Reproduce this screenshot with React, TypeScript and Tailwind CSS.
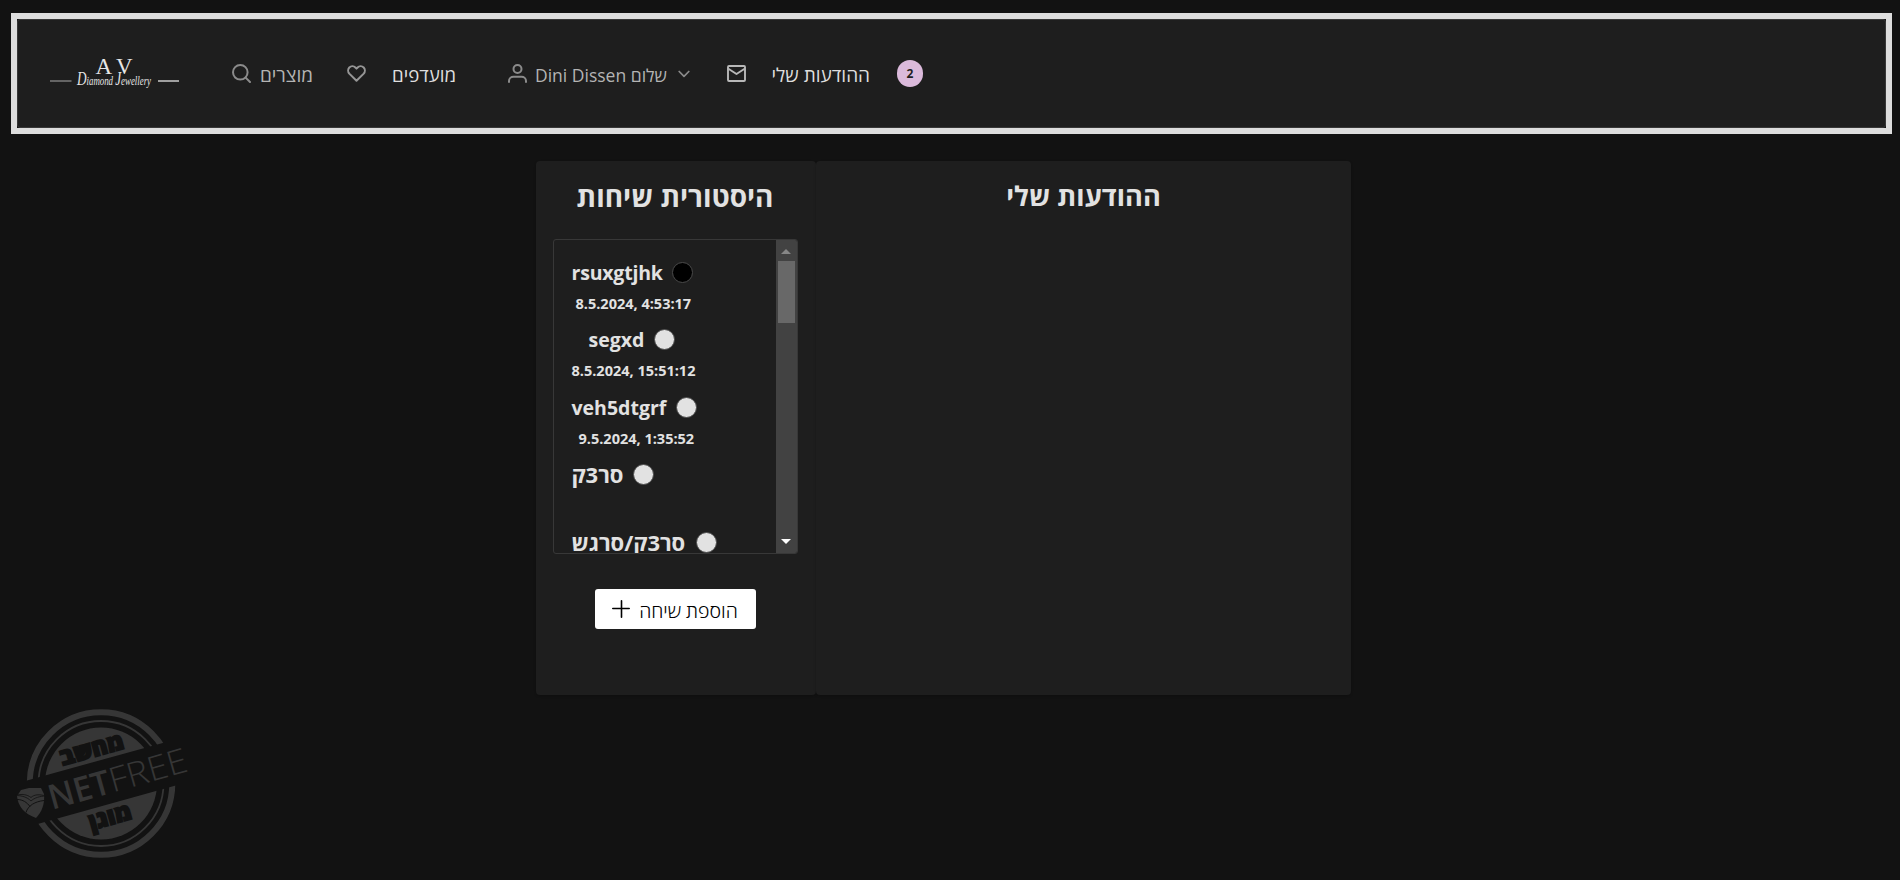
import React from 'react';

type IconProps = { className?: string };

const SearchIcon = ({ className }: IconProps) => (
  <svg viewBox="0 0 19 19" className={className} fill="none" stroke="currentColor" strokeWidth="2" strokeLinecap="round">
    <circle cx="8.3" cy="8.3" r="7.3" />
    <path d="M13.6 13.6 18 18" />
  </svg>
);

const HeartIcon = ({ className }: IconProps) => (
  <svg viewBox="0 0 19 17" className={className} fill="none" stroke="currentColor" strokeWidth="2" strokeLinejoin="round">
    <path d="M9.5 15.800 2.300 8.600C.7 6.800.8 4.100 2.300 2.500c1.800-1.700 4.400-1.700 6.100 0l1.100 1.100 1.100-1.100c1.700-1.700 4.300-1.700 6.100 0 1.500 1.600 1.600 4.300 0 6.100Z" />
  </svg>
);

const UserIcon = ({ className }: IconProps) => (
  <svg viewBox="0 0 19 19" className={className} fill="none" stroke="currentColor" strokeWidth="2" strokeLinecap="round">
    <circle cx="9.500" cy="5" r="4" />
    <path d="M1 17.900V17c0-2.500 2-4.200 4.500-4.200h8c2.500 0 4.500 1.700 4.500 4.200v.9" />
  </svg>
);

const ChevronIcon = ({ className }: IconProps) => (
  <svg viewBox="0 0 12 8" className={className} fill="none" stroke="currentColor" strokeWidth="1.700" strokeLinecap="round" strokeLinejoin="round">
    <path d="M1.200 1.500 6 6.300l4.800-4.800" />
  </svg>
);

const EnvelopeIcon = ({ className }: IconProps) => (
  <svg viewBox="0 0 19 17" className={className} fill="none" stroke="currentColor" strokeWidth="1.900" strokeLinejoin="round">
    <rect x="1" y="1" width="17" height="15" rx="1" />
    <path d="M1 3.500 9.500 9 18 3.500" />
  </svg>
);

const PlusIcon = ({ className }: IconProps) => (
  <svg viewBox="0 0 18 18" className={className} fill="none" stroke="currentColor" strokeWidth="1.600" strokeLinecap="round">
    <path d="M9.500 .8v16.400M.8 8.500h16.400" />
  </svg>
);

const Logo = () => (
  <svg viewBox="0 -6 130 46" className="h-[46px] w-[130px] shrink-0" fill="none" stroke="#e6e6e6">
    <g fill="#e6e6e6" stroke="none" fontFamily="Liberation Serif, serif">
      <text x="45.500" y="16.500" fontSize="23">A</text>
      <text x="66" y="16.500" fontSize="23">V</text>
      <text x="27" y="28" fontSize="12" fontStyle="italic" textLength="74" lengthAdjust="spacingAndGlyphs">
        <tspan fontSize="18">D</tspan>iamond <tspan fontSize="18">J</tspan>ewellery
      </text>
    </g>
    <path d="M0 24h21.500" stroke="#8c8c8c" strokeWidth="1.300" />
    <path d="M108 24h21" strokeWidth="1.300" />
  </svg>
);

const Watermark = () => (
  <svg viewBox="0 0 190 170" className="h-[170px] w-[190px]" fill="none">
    <defs>
      <clipPath id="disc-halves">
        <path d="M-20-60H260V16L-20 93.500ZM-20 140 260 62V300H-20Z" />
      </clipPath>
    </defs>
    <g clipPath="url(#disc-halves)">
      <circle cx="101" cy="83.500" r="71.300" stroke="#363636" strokeWidth="6" />
      <circle cx="101" cy="83.500" r="62.500" stroke="#363636" strokeWidth="1.800" />
      <circle cx="101" cy="83.500" r="56" fill="#363636" />
    </g>
    <g fontFamily="Open Sans, Noto Sans, sans-serif">
      <g fill="#121212" stroke="#121212" strokeWidth="1.800" fontSize="23" fontWeight="800" textAnchor="middle">
        <text transform="translate(63 65.500) rotate(-15.500)" x="32" y="0" direction="rtl" textLength="65" lengthAdjust="spacingAndGlyphs">מחשב</text>
        <text transform="translate(92 130) rotate(-15.500)" x="21" y="0" direction="rtl" textLength="43" lengthAdjust="spacingAndGlyphs">מוגן</text>
      </g>
      <g transform="translate(53 109.500) rotate(-15.800)" fill="#363636">
        <text x="-1" y="0" fontSize="34" fontWeight="600" textLength="63" lengthAdjust="spacingAndGlyphs">NET</text>
        <text x="62" y="0" fontSize="34" fontWeight="300" textLength="80" lengthAdjust="spacingAndGlyphs">FREE</text>
      </g>
    </g>
    <path d="M21 90 29 88 41 88 44 94C45 103 42 112 36 118 25 114 18 107 17 96Z" fill="#363636" />
    <path d="M15 95.500c7-2 12-1 16 2 3-3 8-3.500 15-1.500-6 0-12 2-15 5-4-4-9-5.500-16-5.500Z" fill="#363636" stroke="#121212" strokeWidth=".8" />
    <path d="M17 99.500c6 0 10 3 13 7M44 100.500c-9 1-16 5-18 12" stroke="#121212" />
  </svg>
);

type Chat = { name: string; date: string; dot: string; title: string; stamp: string };

const chats: Chat[] = [
  { name: 'rsuxgtjhk', date: '8.5.2024, 4:53:17', dot: 'bg-black', title: 'w-[90px] text-[19.5px] tracking-[-0.2px]', stamp: 'ml-1' },
  { name: 'segxd', date: '8.5.2024, 15:51:12', dot: 'bg-[#e2e2e2]', title: 'ml-[17px] w-[55px] text-[19.5px]', stamp: '' },
  { name: 'veh5dtgrf', date: '9.5.2024, 1:35:52', dot: 'bg-[#e2e2e2]', title: 'w-[94px] text-[19.5px]', stamp: 'ml-[7px]' },
  { name: 'סר3ק', date: '', dot: 'bg-[#e2e2e2]', title: 'w-[51px] text-[22px]', stamp: '' },
  { name: 'סר3ק/סרגש', date: '', dot: 'bg-[#e2e2e2]', title: 'w-[114px] text-[22px]', stamp: '' },
];

const Header = () => (
  <header className="h-[121px] border-[6px] border-[#dddddd] bg-[#121212]">
    <nav className="flex h-full items-center rounded-[3px] border border-[#383838] bg-[#1e1e1e] pl-8 text-[19px] whitespace-nowrap text-[#b4b4b4]">
      <Logo />
      <SearchIcon className="ml-[52px] h-[19px] w-[19px] shrink-0 text-[#8b8b8b]" />
      <span dir="rtl" className="ml-[9px] w-[53px] shrink-0 pt-[3px]">מוצרים</span>
      <HeartIcon className="ml-[34px] h-[17px] w-[19px] shrink-0 text-[#969696]" />
      <span dir="rtl" className="ml-[26px] w-[64px] shrink-0 pt-[3px] text-[18.7px] text-[#dedede]">מועדפים</span>
      <UserIcon className="ml-[52px] h-[19px] w-[19px] shrink-0 text-[#8b8b8b]" />
      <span dir="ltr" className="ml-2 w-[132px] shrink-0 pt-[3px] text-[17.5px]">Dini Dissen שלום</span>
      <ChevronIcon className="ml-[11px] h-2 w-3 shrink-0 text-[#8b8b8b]" />
      <EnvelopeIcon className="ml-[37px] h-[17px] w-[19px] shrink-0 text-[#b8b8b8]" />
      <span dir="rtl" className="ml-[26px] w-[98px] shrink-0 pt-[3px] text-[#dedede]">ההודעות שלי</span>
      <span className="ml-[27px] flex h-[27px] w-[26px] shrink-0 items-center justify-center rounded-full bg-[#dbbadb] text-[12px] font-bold text-[#1e1e1e]">2</span>
    </nav>
  </header>
);

const ChatList = () => (
  <div className="flex h-[315px] w-[245px] overflow-hidden rounded-[3px] border border-[#383838]">
    <ul className="flex flex-1 flex-col pt-4 pl-[18px]">
      {chats.map((chat) => (
        <li key={chat.name} className="h-[67.4px] shrink-0 whitespace-nowrap">
          <div className="flex h-[33px] items-center">
            <span className={`shrink-0 font-bold ${chat.title}`}>{chat.name}</span>
            <span className={`ml-2.5 h-[21px] w-[21px] shrink-0 rounded-full border border-[#4a4a4a] ${chat.dot}`} />
          </div>
          <div className={`text-[14.5px] leading-[30px] font-bold ${chat.stamp}`}>{chat.date}</div>
        </li>
      ))}
    </ul>
    <div className="flex w-[21px] flex-col items-center bg-[#424242]">
      <svg viewBox="0 0 10 5" className="mt-[9px] h-[5px] w-[10px] shrink-0" fill="#868686"><path d="M0 5 5 0l5 5Z" /></svg>
      <div className="mt-[7px] h-[62px] w-[17px] bg-[#686868]" />
      <svg viewBox="0 0 10 5" className="mt-auto mb-[9px] h-[5px] w-[10px] shrink-0" fill="#ffffff"><path d="M0 0 5 5l5-5Z" /></svg>
    </div>
  </div>
);

export default function App() {
  return (
    <div className="relative h-[880px] w-[1900px] overflow-hidden bg-[#121212] pt-[13px] pr-2 pl-[11px] font-['Open_Sans','Noto_Sans',sans-serif] text-[#e2e2e2]">
      <Header />
      <main className="mt-[27px] ml-[525px] flex h-[534px]">
        <section className="flex w-[280px] flex-col items-center rounded-[4px] bg-[#1e1e1e] pr-0.5 shadow-sm">
          <h2 dir="rtl" className="mt-[15px] h-[63px] text-[28px] leading-[40px] font-bold whitespace-nowrap">היסטורית שיחות</h2>
          <ChatList />
          <button className="mt-[35px] flex h-10 w-[161px] items-center justify-center gap-[9px] rounded-[3px] bg-white text-[19.5px] whitespace-nowrap text-black">
            <PlusIcon className="h-[18px] w-[18px] shrink-0" />
            <span dir="rtl" className="w-[99px] pt-[3px] font-light">הוספת שיחה</span>
          </button>
        </section>
        <section className="flex w-[535px] flex-col items-center rounded-[4px] bg-[#1e1e1e] shadow-sm">
          <h2 dir="rtl" className="mt-[15px] text-[27.2px] leading-[40px] font-bold whitespace-nowrap">ההודעות שלי</h2>
        </section>
      </main>
      <div className="absolute top-[700px] left-0">
        <Watermark />
      </div>
    </div>
  );
}
